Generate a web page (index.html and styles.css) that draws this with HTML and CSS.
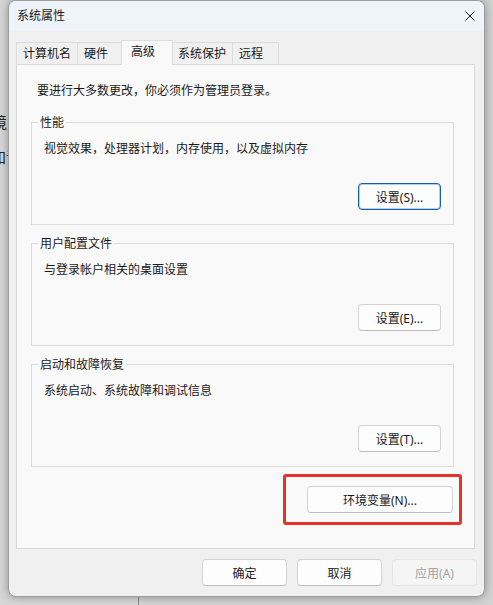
FILE: index.html
```html
<!DOCTYPE html>
<html lang="zh-CN">
<head>
  <meta charset="UTF-8">
  <meta name="viewport" content="width=device-width, initial-scale=1.0">
  <title>系统属性</title>
  <link rel="stylesheet" href="styles.css">
</head>
<body>
  <div class="backwin">
    <span class="frag frag-one">境</span>
    <span class="frag frag-two">知识</span>
  </div>

  <div class="dialog">
    <div class="titlebar">
      <span class="title">系统属性</span>
      <span class="close">
        <svg width="10" height="10" viewBox="0 0 10 10">
          <path d="M0.5 0.5 L9.5 9.5 M9.5 0.5 L0.5 9.5" stroke="#1a1a1a" stroke-width="1" fill="none"/>
        </svg>
      </span>
    </div>

    <div class="content">
      <div class="tabs">
        <div class="tab">计算机名</div>
        <div class="tab">硬件</div>
        <div class="tab active">高级</div>
        <div class="tab">系统保护</div>
        <div class="tab">远程</div>
      </div>

      <div class="panel">
        <p class="intro">要进行大多数更改，你必须作为管理员登录。</p>

        <fieldset class="group">
          <legend>性能</legend>
          <p class="desc">视觉效果，处理器计划，内存使用，以及虚拟内存</p>
          <div class="group-actions">
            <button class="btn focused">设置(S)...</button>
          </div>
        </fieldset>

        <fieldset class="group">
          <legend>用户配置文件</legend>
          <p class="desc">与登录帐户相关的桌面设置</p>
          <div class="group-actions">
            <button class="btn">设置(E)...</button>
          </div>
        </fieldset>

        <fieldset class="group">
          <legend>启动和故障恢复</legend>
          <p class="desc">系统启动、系统故障和调试信息</p>
          <div class="group-actions">
            <button class="btn">设置(T)...</button>
          </div>
        </fieldset>

        <div class="env-row">
          <span class="marked">
            <button class="btn env">环境变量(N)...</button>
          </span>
        </div>
      </div>

      <div class="footer">
        <button class="btn wide">确定</button>
        <button class="btn wide">取消</button>
        <button class="btn wide" disabled>应用(A)</button>
      </div>
    </div>
  </div>
</body>
</html>
```

FILE: styles.css
```css
* {
  box-sizing: border-box;
}

html, body {
  margin: 0;
  width: 493px;
  height: 605px;
  overflow: hidden;
}

body {
  position: relative;
  padding-left: 8px;
  background-color: #d2d2d2;
  font-family: "Noto Sans", "Noto Sans CJK SC", sans-serif;
  font-size: 12px;
  color: #1a1a1a;
}

/* window behind the dialog, only its edges show */
.backwin {
  position: absolute;
  left: 0;
  top: 0;
  bottom: 0;
  width: 139px;
  border-right: 1px solid #8b8b8b;
  background-color: #d6d6d6;
}

.frag {
  position: absolute;
  font-size: 15px;
  line-height: 16px;
  color: #222;
}

.frag-one {
  left: -8px;
  top: 114px;
}

.frag-two {
  left: -9px;
  top: 149px;
}

.dialog {
  position: relative;
  width: 477px;
  height: 597px;
  border: 1px solid #9c9c9c;
  border-radius: 8px;
  background-color: #f0f0f0;
  overflow: hidden;
  box-shadow: 0 0 9px rgba(0, 0, 0, 0.35);
}

.titlebar {
  height: 30px;
  display: flex;
  align-items: center;
  justify-content: space-between;
  padding: 0 9px 0 8px;
  background-color: #eff3fa;
}

.title {
  line-height: 16px;
}

.close {
  display: flex;
}

.content {
  padding: 9px 7px 10px 7px;
}

.tabs {
  display: flex;
  align-items: flex-end;
  height: 24px;
}

.tab {
  position: relative;
  height: 22px;
  min-width: 47px;
  padding: 0 6px 0 6px;
  line-height: 21px;
  background-color: #f0f0f0;
  border: 1px solid #dcdcdc;
  border-bottom: none;
  margin-right: -1px;
}

.tab.active {
  z-index: 1;
  height: 25px;
  min-width: 52px;
  margin: 0 -2px -1px -2px;
  padding-left: 9px;
  padding-top: 1px;
  background-color: #f9f9f9;
  line-height: 20px;
}

.tab.active + .tab {
  margin-left: 0;
}

.panel {
  height: 485px;
  margin-right: 2px;
  padding: 18px 20px 0 14px;
  border: 1px solid #d9d9d9;
  background-color: #f9f9f9;
}

.intro {
  margin: 0 0 15px 6px;
  line-height: 16px;
}

.group {
  margin: 0;
  min-width: 0;
  padding: 10px 12px 14px 6px;
  border: 1px solid #dcdcdc;
}

.group + .group {
  margin-top: 10px;
}

.group legend {
  padding: 0 2px;
  line-height: 17px;
}

.desc {
  margin: 0 0 0 6px;
  line-height: 16px;
}

.group-actions {
  display: flex;
  justify-content: flex-end;
  margin-top: 26px;
}

.btn {
  height: 27px;
  width: 83px;
  padding: 0;
  font-family: inherit;
  font-size: 12px;
  color: #1a1a1a;
  background-color: #fdfdfd;
  border: 1px solid #d3d3d3;
  border-bottom-color: #bdbdbd;
  border-radius: 4px;
}

.btn.focused {
  border-color: #1560a8;
  box-shadow: inset 0 0 0 1px rgba(21, 96, 168, 0.3);
}

.btn.wide {
  width: 85px;
}

.btn:disabled {
  color: #a2a2a2;
  background-color: #f5f5f5;
  border-color: #e6e6e6;
}

.env-row {
  display: flex;
  justify-content: flex-end;
  margin-top: 19px;
  padding-right: 1px;
}

.marked {
  position: relative;
  display: flex;
}

/* red annotation box drawn over the screenshot */
.marked::after {
  content: "";
  position: absolute;
  left: -24px;
  right: -9px;
  top: -12px;
  bottom: -12px;
  border: 3px solid #e7322b;
  border-radius: 3px;
}

.btn.env {
  width: 146px;
}

.footer {
  display: flex;
  justify-content: flex-end;
  gap: 10px;
  margin-top: 10px;
}
```
